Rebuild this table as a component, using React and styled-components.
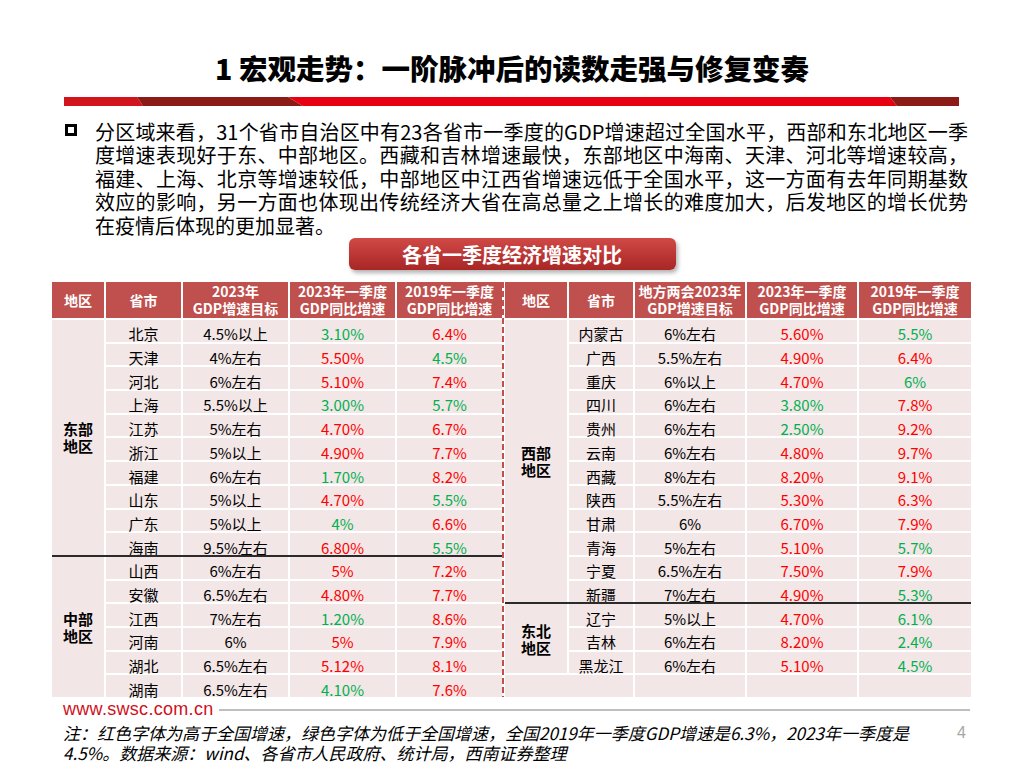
import React from 'react';
import styled, { createGlobalStyle } from 'styled-components';

const GlobalStyle = createGlobalStyle`
  body {
    margin: 0;
    background: #fff;
  }
`;

const RED = '#FF0000';
const GREEN = '#00B050';

const Page = styled.div`
  width: 1024px;
  height: 768px;
  background: #fff;
  display: flex;
  flex-direction: column;
  overflow: hidden;
  font-family: "Noto Sans CJK SC", "Noto Sans", sans-serif;
  color: #000;

  & > * {
    flex-shrink: 0;
  }
`;

const Title = styled.h1`
  margin: 50px 0 0;
  height: 36px;
  font-size: 28.5px;
  line-height: 36px;
  font-weight: 900;
  text-align: center;
  color: #000;
`;

const Bar = styled.svg`
  display: block;
  margin: 11px 0 0 64px;
`;

const Lead = styled.div`
  display: flex;
  gap: 18px;
  margin-top: 14px;
  padding-left: 65px;
`;

const Bullet = styled.span`
  flex: none;
  width: 12px;
  height: 12px;
  margin-top: 4px;
  box-sizing: border-box;
  border: 3px solid #000;
`;

const LeadText = styled.div`
  width: 873px;
  font-size: 20px;
  line-height: 23.4px;
`;

const LeadLine = styled.span`
  display: block;
  text-align: ${p => (p.$last ? 'left' : 'justify')};
  text-align-last: ${p => (p.$last ? 'left' : 'justify')};
`;

const Banner = styled.div`
  margin: 1px auto 0;
  width: 327px;
  height: 32px;
  border-radius: 6px;
  background: linear-gradient(to bottom, #D04947, #A82624);
  box-shadow: 2px 3px 4px rgba(0, 0, 0, 0.3);
  display: flex;
  align-items: center;
  justify-content: center;
  color: #fff;
  font-size: 20px;
  font-weight: 700;
`;

const TableWrap = styled.div`
  display: flex;
  margin: 12px 0 0 52px;
`;

const Side = styled.div`
  display: flex;
  flex-direction: column;
`;

const HeadRow = styled.div`
  display: grid;
  grid-template-columns: ${p => p.$cols};
  column-gap: 2px;
  height: 36px;
  margin-bottom: 2px;
`;

const HeadCell = styled.div`
  background: #C0504D;
  color: #fff;
  font-weight: 700;
  font-size: 14px;
  line-height: 17px;
  display: flex;
  align-items: center;
  justify-content: center;
  text-align: center;
  white-space: pre-line;
`;

const Block = styled.div`
  display: grid;
  grid-template-columns: ${p => p.$cols};
  grid-auto-rows: 21.7px;
  gap: 2px;
`;

const Cell = styled.div`
  background: #F2E6E6;
  color: ${p => p.$color || '#000'};
  font-size: 15px;
  line-height: 15px;
  display: flex;
  align-items: center;
  justify-content: center;
  padding-top: 6px;
  box-sizing: border-box;
  white-space: nowrap;
  grid-column: ${p => (p.$wide ? 'span 2' : 'auto')};
`;

const RegionCell = styled.div`
  background: #F2E6E6;
  grid-row: span ${p => p.$span};
  display: flex;
  align-items: center;
  justify-content: center;
  text-align: center;
  font-size: 15px;
  line-height: 17px;
  font-weight: 700;
  white-space: pre-line;
`;

const Separator = styled.div`
  height: 2px;
  background: #2B2B2B;
`;

const Divider = styled.div`
  width: 2px;
  margin-right: 1px;
  background: repeating-linear-gradient(to bottom, #C0504D 0 6px, transparent 6px 9px);
`;

const Footer = styled.div`
  display: flex;
  align-items: center;
  height: 18px;
  margin-top: 3px;
  padding-left: 63px;
`;

const Url = styled.span`
  font-family: "Liberation Sans", Arial, sans-serif;
  font-size: 18px;
  letter-spacing: 0.3px;
  color: #D0101B;
`;

const FooterRule = styled.div`
  flex: 1;
  height: 2px;
  margin: 2px 54px 0 5px;
  background: #BFBFBF;
`;

const NoteRow = styled.div`
  display: flex;
  margin-top: 5px;
  padding-left: 63px;
`;

const NoteText = styled.div`
  font-size: 17px;
  line-height: 20px;
  font-style: italic;
  white-space: nowrap;
`;

const PageNum = styled.span`
  margin-left: auto;
  margin-right: 58px;
  font-family: "Liberation Sans", Arial, sans-serif;
  font-size: 16px;
  line-height: 20px;
  color: #A6A6A6;
`;

const LEFT_COLS = '52px 75px 105px 105px 105px';
const RIGHT_COLS = '62px 64px 110px 110px 112px';

const leftHead = ['地区', '省市', '2023年\nGDP增速目标', '2023年一季度\nGDP同比增速', '2019年一季度\nGDP同比增速'];
const rightHead = ['地区', '省市', '地方两会2023年\nGDP增速目标', '2023年一季度\nGDP同比增速', '2019年一季度\nGDP同比增速'];

const east = [
  ['北京', '4.5%以上', '3.10%', '6.4%'],
  ['天津', '4%左右', '5.50%', '4.5%'],
  ['河北', '6%左右', '5.10%', '7.4%'],
  ['上海', '5.5%以上', '3.00%', '5.7%'],
  ['江苏', '5%左右', '4.70%', '6.7%'],
  ['浙江', '5%以上', '4.90%', '7.7%'],
  ['福建', '6%左右', '1.70%', '8.2%'],
  ['山东', '5%以上', '4.70%', '5.5%'],
  ['广东', '5%以上', '4%', '6.6%'],
  ['海南', '9.5%左右', '6.80%', '5.5%'],
];

const central = [
  ['山西', '6%左右', '5%', '7.2%'],
  ['安徽', '6.5%左右', '4.80%', '7.7%'],
  ['江西', '7%左右', '1.20%', '8.6%'],
  ['河南', '6%', '5%', '7.9%'],
  ['湖北', '6.5%左右', '5.12%', '8.1%'],
  ['湖南', '6.5%左右', '4.10%', '7.6%'],
];

const west = [
  ['内蒙古', '6%左右', '5.60%', '5.5%'],
  ['广西', '5.5%左右', '4.90%', '6.4%'],
  ['重庆', '6%以上', '4.70%', '6%'],
  ['四川', '6%左右', '3.80%', '7.8%'],
  ['贵州', '6%左右', '2.50%', '9.2%'],
  ['云南', '6%左右', '4.80%', '9.7%'],
  ['西藏', '8%左右', '8.20%', '9.1%'],
  ['陕西', '5.5%左右', '5.30%', '6.3%'],
  ['甘肃', '6%', '6.70%', '7.9%'],
  ['青海', '5%左右', '5.10%', '5.7%'],
  ['宁夏', '6.5%左右', '7.50%', '7.9%'],
  ['新疆', '7%左右', '4.90%', '5.3%'],
];

const northeast = [
  ['辽宁', '5%以上', '4.70%', '6.1%'],
  ['吉林', '6%左右', '8.20%', '2.4%'],
  ['黑龙江', '6%左右', '5.10%', '4.5%'],
];

// red when at or above the national figure, green when below
const tone = (value, national) => (parseFloat(value) >= national ? RED : GREEN);

function Rows({ rows }) {
  return rows.map(([prov, target, q2023, q2019]) => (
    <React.Fragment key={prov}>
      <Cell>{prov}</Cell>
      <Cell>{target}</Cell>
      <Cell $color={tone(q2023, 4.5)}>{q2023}</Cell>
      <Cell $color={tone(q2019, 6.3)}>{q2019}</Cell>
    </React.Fragment>
  ));
}

function RegionBlock({ cols, label, rows, children }) {
  return (
    <Block $cols={cols}>
      <RegionCell $span={rows.length}>{label}</RegionCell>
      <Rows rows={rows} />
      {children}
    </Block>
  );
}

function Header({ cols, titles }) {
  return (
    <HeadRow $cols={cols}>
      {titles.map(t => (
        <HeadCell key={t}>{t}</HeadCell>
      ))}
    </HeadRow>
  );
}

export default function App() {
  return (
    <Page>
      <GlobalStyle />
      <Title>1 宏观走势：一阶脉冲后的读数走强与修复变奏</Title>
      <Bar width="895" height="9" viewBox="0 0 895 9">
        <polygon points="0,0 73,0 79,9 0,9" fill="#D2141D" />
        <polygon points="73,0 224,0 239,9 79,9" fill="#8C1A16" />
        <polygon points="224,0 826,0 833,9 239,9" fill="#E60012" />
        <polygon points="826,0 895,0 895,9 833,9" fill="#8C1A16" />
      </Bar>

      <Lead>
        <Bullet />
        <LeadText>
          <LeadLine>分区域来看，31个省市自治区中有23各省市一季度的GDP增速超过全国水平，西部和东北地区一季</LeadLine>
          <LeadLine>度增速表现好于东、中部地区。西藏和吉林增速最快，东部地区中海南、天津、河北等增速较高，</LeadLine>
          <LeadLine>福建、上海、北京等增速较低，中部地区中江西省增速远低于全国水平，这一方面有去年同期基数</LeadLine>
          <LeadLine>效应的影响，另一方面也体现出传统经济大省在高总量之上增长的难度加大，后发地区的增长优势</LeadLine>
          <LeadLine $last>在疫情后体现的更加显著。</LeadLine>
        </LeadText>
      </Lead>

      <Banner>各省一季度经济增速对比</Banner>

      <TableWrap>
        <Side>
          <Header cols={LEFT_COLS} titles={leftHead} />
          <RegionBlock cols={LEFT_COLS} label={'东部\n地区'} rows={east} />
          <Separator />
          <RegionBlock cols={LEFT_COLS} label={'中部\n地区'} rows={central} />
        </Side>
        <Divider />
        <Side>
          <Header cols={RIGHT_COLS} titles={rightHead} />
          <RegionBlock cols={RIGHT_COLS} label={'西部\n地区'} rows={west} />
          <Separator />
          <RegionBlock cols={RIGHT_COLS} label={'东北\n地区'} rows={northeast}>
            <Cell $wide />
            <Cell />
            <Cell />
            <Cell />
          </RegionBlock>
        </Side>
      </TableWrap>

      <Footer>
        <Url>www.swsc.com.cn</Url>
        <FooterRule />
      </Footer>
      <NoteRow>
        <NoteText>
          注：红色字体为高于全国增速，绿色字体为低于全国增速，全国2019年一季度GDP增速是6.3%，2023年一季度是
          <br />
          4.5%。数据来源：wind、各省市人民政府、统计局，西南证券整理
        </NoteText>
        <PageNum>4</PageNum>
      </NoteRow>
    </Page>
  );
}
